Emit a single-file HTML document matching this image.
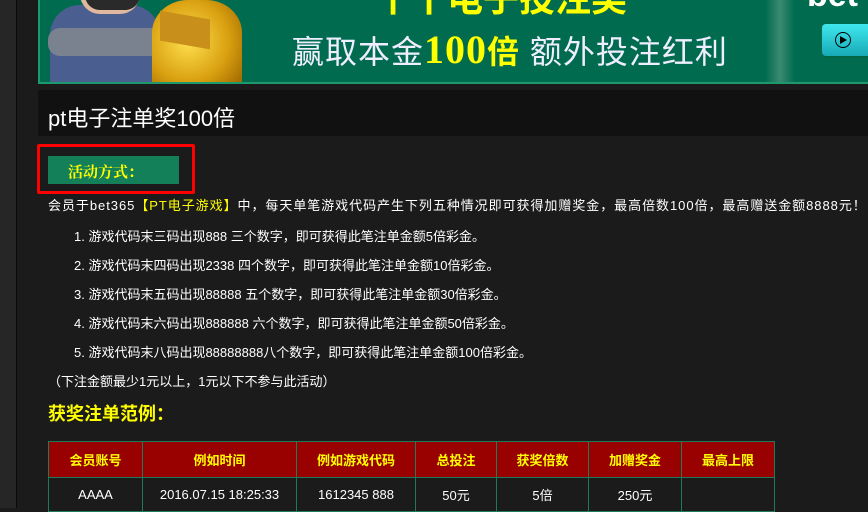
<!DOCTYPE html>
<html><head><meta charset="utf-8">
<style>
*{margin:0;padding:0;box-sizing:border-box}
body{width:868px;height:508px;overflow:hidden;background:#1b1b1b;font-family:"Liberation Sans","Noto Sans CJK SC",sans-serif;position:relative;color:#fff}
.strip{position:absolute;left:0;top:0;width:17px;height:508px;background:#262626;border-right:1px solid #0a0a0a}
.banner{position:absolute;left:38px;top:0;width:830px;height:84px;background:#006b4f;border-left:2px solid #1c9a6e;border-bottom:2px solid #1c9a6e;overflow:hidden}
.body1{position:absolute;left:10px;top:5px;width:110px;height:80px;background:#4a5f90;border-radius:30px 30px 0 0}
.arm{position:absolute;left:8px;top:28px;width:115px;height:28px;background:#7a8290;border-radius:12px}
.face{position:absolute;left:40px;top:-10px;width:60px;height:24px;background:#e0b8a0;border-radius:0 0 20px 20px}
.beard{position:absolute;left:45px;top:-5px;width:55px;height:15px;background:#2a2a2a;border-radius:0 0 20px 20px}
.gold{position:absolute;left:112px;top:0;width:90px;height:82px;background:radial-gradient(circle at 40% 50%,#ffe050,#d9a010 60%,#a06800);border-radius:40% 40% 0 0}
.chest{position:absolute;left:120px;top:15px;width:50px;height:30px;background:#c8901a;transform:skewY(10deg)}
.bt{position:absolute;left:252px;top:26px;font-size:32px;color:#eef;white-space:nowrap;letter-spacing:1px}
.bt b{color:#ffff00;font-family:"Liberation Serif","Noto Serif CJK SC",serif;font-size:40px;font-weight:bold}
.bt i{font-style:normal;color:#ffff00;font-weight:bold}
.top{position:absolute;left:335px;top:-30px;font-size:36px;color:#ffff00;font-weight:bold}
.sep{position:absolute;left:725px;top:0;width:30px;height:82px;background:linear-gradient(90deg,#006b4f,#3a8a70,#006b4f)}
.logo{position:absolute;left:767px;top:-24px;font-size:34px;font-weight:bold;color:#fff}
.btn{position:absolute;left:782px;top:24px;width:60px;height:32px;background:linear-gradient(#40e8ee,#17a9b5);border-radius:4px;box-shadow:0 2px 0 #064}
.btn span{position:absolute;left:13px;top:8px;width:16px;height:16px;border:1.5px solid #000;border-radius:50%}
.btn span:after{content:"";position:absolute;left:4px;top:3px;border-left:7px solid #000;border-top:4px solid transparent;border-bottom:4px solid transparent}
.title{position:absolute;left:38px;top:90px;width:830px;height:46px;background:#111;font-size:22px;padding:11px 0 0 10px}
.redbox{position:absolute;left:37px;top:144px;width:158px;height:50px;border:3px solid #f00;border-radius:2px}
.lab{position:absolute;left:48px;top:156px;width:131px;height:28px;background:#13805a;color:#ffff00;font-family:"Liberation Serif","Noto Serif CJK SC",serif;font-weight:bold;font-size:15px;padding:5px 0 0 20px}
.p{position:absolute;left:48px;top:195px;font-size:13px;white-space:nowrap;letter-spacing:0.95px}
.y{color:#ffff00}
.li{position:absolute;left:74px;font-size:13px;white-space:nowrap}
.note{position:absolute;left:48px;top:371px;font-size:13px}
.h{position:absolute;left:48px;top:400px;font-size:18px;font-weight:bold;color:#ffff00}
table{position:absolute;left:48px;top:441px;border-collapse:collapse;font-size:13px}
td{border:1px solid #1f7a5a;text-align:center}
tr.hd td{background:#990000;color:#ffff00;font-weight:bold;height:36px}
tr.r td{height:34px;color:#fff}
</style></head><body>
<div class="strip"></div>
<div class="banner">
<div class="body1"></div><div class="arm"></div><div class="face"></div><div class="beard"></div>
<div class="gold"></div><div class="chest"></div>
<div class="top">十十电子投注奖</div>
<div class="bt">赢取本金<b>100</b><i>倍</i> 额外投注红利</div>
<div class="sep"></div>
<div class="logo">bet</div>
<div class="btn"><span></span></div>
</div>
<div class="title">pt电子注单奖100倍</div>
<div class="redbox"></div>
<div class="lab">活动方式：</div>
<div class="p">会员于bet365<span class="y">【PT电子游戏】</span>中，每天单笔游戏代码产生下列五种情况即可获得加赠奖金，最高倍数100倍，最高赠送金额8888元！</div>
<div class="li" style="top:226px">1. 游戏代码末三码出现888 三个数字，即可获得此笔注单金额5倍彩金。</div>
<div class="li" style="top:255px">2. 游戏代码末四码出现2338 四个数字，即可获得此笔注单金额10倍彩金。</div>
<div class="li" style="top:284px">3. 游戏代码末五码出现88888 五个数字，即可获得此笔注单金额30倍彩金。</div>
<div class="li" style="top:313px">4. 游戏代码末六码出现888888 六个数字，即可获得此笔注单金额50倍彩金。</div>
<div class="li" style="top:342px">5. 游戏代码末八码出现88888888八个数字，即可获得此笔注单金额100倍彩金。</div>
<div class="note">（下注金额最少1元以上，1元以下不参与此活动）</div>
<div class="h">获奖注单范例：</div>
<table>
<tr class="hd"><td style="width:94px">会员账号</td><td style="width:154px">例如时间</td><td style="width:119px">例如游戏代码</td><td style="width:81px">总投注</td><td style="width:92px">获奖倍数</td><td style="width:93px">加赠奖金</td><td style="width:93px">最高上限</td></tr>
<tr class="r"><td>AAAA</td><td>2016.07.15 18:25:33</td><td>1612345 888</td><td>50元</td><td>5倍</td><td>250元</td><td></td></tr>
</table>
</body></html>
